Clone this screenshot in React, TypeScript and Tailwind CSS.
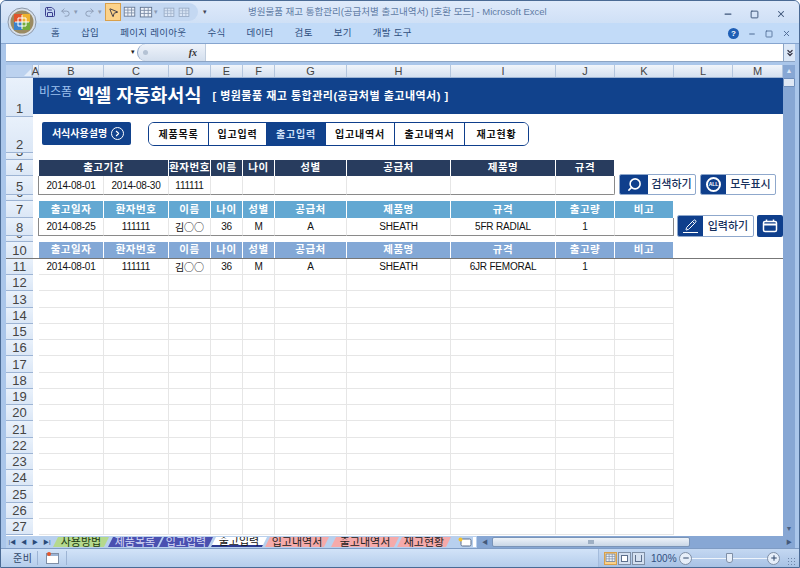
import React from 'react';
import { Pencil, Search, Save, Undo2, Redo2, MousePointer2, Minus, Square, X, Plus, ChevronRight, ChevronsDown } from 'lucide-react';

const FONT = "font-['Liberation_Sans','Noto_Sans_CJK_KR',sans-serif]";
// row header + columns A..M
const COLS = 'grid grid-cols-[27px_6px_65px_65px_42px_32px_32px_72px_104px_105px_59px_59px_59px_50px]';
const ROW_LABEL = 'flex items-end justify-center border-b border-[#9db4d4] bg-gradient-to-b from-[#e9f1fb] to-[#dbe7f6] text-[13px] leading-[15px] text-[#444] overflow-hidden';

const columnLabels = ['A', 'B', 'C', 'D', 'E', 'F', 'G', 'H', 'I', 'J', 'K', 'L', 'M'];
const searchHeads = ['환자번호', '이름', '나이', '성별', '공급처', '제품명', '규격'];
const listHeads = ['출고일자', '환자번호', '이름', '나이', '성별', '공급처', '제품명', '규격', '출고량', '비고'];
const inputRow = ['2014-08-25', '111111', '김○○', '36', 'M', 'A', 'SHEATH', '5FR RADIAL', '1', ''];
const listRow = ['2014-08-01', '111111', '김○○', '36', 'M', 'A', 'SHEATH', '6JR FEMORAL', '1', ''];
const navItems = [
  { label: '제품목록', w: 'w-[60px]' },
  { label: '입고입력', w: 'w-[58px]' },
  { label: '출고입력', w: 'w-[59px]', active: true },
  { label: '입고내역서', w: 'w-[69px]' },
  { label: '출고내역서', w: 'w-[70px]' },
  { label: '재고현황', w: 'w-[63px]' },
];
const ribbonTabs = ['홈', '삽입', '페이지 레이아웃', '수식', '데이터', '검토', '보기', '개발 도구'];
const blankRows = Array.from({ length: 16 }, (_, i) => i + 12);

function OfficeButton() {
  return (
    <svg width="30" height="30" viewBox="0 0 30 30" className="absolute left-[6px] top-[6px] z-10">
      <circle cx="15" cy="15" r="14" fill="#d8dfe8" stroke="#8b97a8" />
      <circle cx="15" cy="15" r="11.500" fill="#9a8a62" />
      <rect x="7" y="7" width="8" height="8" fill="#e2562b" />
      <rect x="15" y="7" width="8" height="8" fill="#efb12e" />
      <rect x="7" y="15" width="8" height="8" fill="#3d82cc" />
      <rect x="15" y="15" width="8" height="8" fill="#74ab3c" />
      <path d="M11 11h8v8h-8zM15 8v14M8 15h14" fill="none" stroke="#fff" strokeWidth="1" />
    </svg>
  );
}

function MiniTable({ className = '' }: { className?: string }) {
  return (
    <svg viewBox="0 0 16 14" className={className}>
      <rect x="1.500" y="1.500" width="13" height="11" fill="#eef3fa" stroke="#5d6f8c" />
      <path d="M1.500 5h13M1.500 8.500h13M6 1.500v11M10.500 1.500v11" stroke="#7c8ca6" />
    </svg>
  );
}

function HeadCell({ children, className = '' }: { children?: React.ReactNode; className?: string }) {
  return (
    <div className={`flex items-center justify-center border-r border-white text-[10.5px] font-bold tracking-[0.5px] text-white ${className}`}>
      {children}
    </div>
  );
}

function DataCell({ children, className = '' }: { children?: React.ReactNode; className?: string }) {
  const isName = typeof children === 'string' && children.includes('○');
  return (
    <div className={`flex items-center justify-center border-r border-[#e6e6e6] text-[#111] ${isName ? "font-['Noto_Sans_CJK_KR',sans-serif] text-[10px]" : 'text-[10px] tracking-[-0.2px]'} ${className}`}>
      {children}
    </div>
  );
}

function ActionButton({ icon, label, className, iconWidth }: { icon: React.ReactNode; label: string; className: string; iconWidth: string }) {
  return (
    <div className={`absolute flex overflow-hidden rounded-[2px] border border-[#8fa8cc] bg-white ${className}`}>
      <div className={`flex items-center justify-center bg-[#0f3f8c] text-white ${iconWidth}`}>{icon}</div>
      <div className="flex flex-1 items-center justify-center text-[11px] font-medium text-[#16305c]">{label}</div>
    </div>
  );
}

function SheetTab({ label, className }: { label: string; className: string }) {
  return (
    <div className={`flex h-[10px] items-center justify-center text-[11px] leading-[10px] [clip-path:polygon(5px_0,100%_0,calc(100%-5px)_100%,0_100%)] ${className}`}>
      {label}
    </div>
  );
}

export default function App() {
  return (
    <div className={`relative flex h-[568px] w-[800px] flex-col overflow-hidden rounded-t-[6px] border border-[#4a6a94] bg-[#aac6ea] ${FONT}`}>
      <OfficeButton />

      {/* 타이틀 바 */}
      <div className="relative flex h-[22px] shrink-0 items-center bg-gradient-to-b from-[#dfeafa] to-[#cfe0f6] pl-[39px]">
        <div className="flex h-[18px] items-center rounded-r-full bg-[#c4d8f2] pr-[8px] text-[#8a9ab4]">
          <Save size={12} className="ml-[4px] text-[#3b3f8f]" />
          <Undo2 size={11} className="ml-[4px]" />
          <span className="ml-[3px] w-[4px] text-[7px]">▾</span>
          <Redo2 size={11} className="ml-[6px]" />
          <span className="ml-[3px] w-[4px] text-[7px]">▾</span>
          <div className="ml-[3px] flex h-[18px] w-[16px] items-center justify-center border border-[#d9a04a] bg-[#fbd28a]">
            <MousePointer2 size={11} className="text-[#334]" />
          </div>
          <MiniTable className="ml-[2px] w-[13px]" />
          <MiniTable className="ml-[3px] w-[14px]" />
          <span className="ml-[1px] w-[4px] text-[7px]">▾</span>
          <MiniTable className="ml-[5px] w-[12px] opacity-50" />
          <MiniTable className="ml-[3px] w-[12px] opacity-50" />
        </div>
        <span className="ml-[5px] text-[7px] text-[#445]">▾</span>
        <div className="absolute left-[247px] top-[4px] whitespace-nowrap text-[9.5px] text-[#5f7ba4]">
          병원물품 재고 통합관리(공급처별 출고내역서) [호환 모드] - Microsoft Excel
        </div>
        <div className="absolute right-[13px] top-[8px] flex items-center gap-[17px] text-[#3c5478]">
          <Minus size={10} strokeWidth={3} />
          <Square size={9} strokeWidth={2.5} />
          <X size={10} strokeWidth={2.5} />
        </div>
      </div>

      {/* 리본 탭 */}
      <div className="relative flex h-[21px] shrink-0 items-center gap-[21px] border-b border-[#86a5cf] bg-[#c2dbf8] pl-[50px] text-[9.5px] tracking-[0.3px] text-[#2f4f80]">
        {ribbonTabs.map(tab => (
          <span key={tab} className="whitespace-nowrap">{tab}</span>
        ))}
        <div className="absolute right-[8px] top-[5px] flex items-center gap-[9px] text-[#4d6a94]">
          <div className="flex h-[11px] w-[11px] items-center justify-center rounded-full bg-[#1f5fb5] text-[8px] font-bold text-white">?</div>
          <Minus size={8} strokeWidth={3} />
          <Square size={8} strokeWidth={2.5} />
          <X size={9} strokeWidth={2.5} />
        </div>
      </div>

      {/* 수식 입력줄 */}
      <div className="flex h-[18px] shrink-0 px-[5px] pr-[4px]">
        <div className="flex w-full border-b border-[#8ca4c4] bg-white">
          <div className="flex w-[131px] items-center justify-end pr-[2px] text-[7px] text-[#222]">▾</div>
          <div className="flex w-[68px] items-center justify-between rounded-l-full border-l border-[#8ca4c4] bg-gradient-to-b from-[#eef3fa] to-[#d4dfee] pl-[5px] pr-[8px]">
            <span className="h-[5px] w-[5px] rounded-full bg-[#b4c2d4]" />
            <span className="font-['Liberation_Serif',serif] text-[10px] font-bold italic text-[#333]">fx</span>
          </div>
          <div className="flex-1 border-l border-[#c0cddd]" />
          <div className="flex w-[12px] items-center justify-center border-l border-[#8ca4c4] bg-[#dce8f7] text-[#334]">
            <ChevronsDown size={10} strokeWidth={3} />
          </div>
        </div>
      </div>

      <div className="h-[3px] shrink-0" />

      {/* 시트 영역 */}
      <div className="flex min-h-0 flex-1 pl-[5px] pr-[4px]">
        <div className="relative w-[777px] bg-white">
          {/* 열 머리글 */}
          <div className={`${COLS} h-[13px] border-b border-[#9db4d4] bg-gradient-to-b from-[#f1f5fb] to-[#d5e0ef] text-[11px] leading-[12px] text-[#444]`}>
            <div className="flex items-end justify-end border-r border-[#b4c6de] bg-[#bcd2ef] pb-[1px] pr-[1px]">
              <span className="h-0 w-0 border-b-[7px] border-l-[7px] border-b-[#e4edf9] border-l-transparent" />
            </div>
            {columnLabels.map(col => (
              <div key={col} className="flex items-center justify-center border-r border-[#b4c6de]">{col}</div>
            ))}
          </div>

          {/* 1행 */}
          <div className={`${COLS} h-[39px]`}>
            <div className={ROW_LABEL}>1</div>
            <div className="col-span-13 pb-[3px]">
              <div className="flex h-[36px] items-center bg-[#11428c] pl-[6px] text-white">
                <span className="-translate-y-[4px] text-[12px] leading-none text-[#9cc0ee]">비즈폼</span>
                <span className="ml-[5px] whitespace-nowrap text-[18.500px] font-bold leading-none">엑셀 자동화서식</span>
                <span className="ml-[11px] whitespace-nowrap text-[11px] font-bold tracking-[0.5px]">[ 병원물품 재고 통합관리(공급처별 출고내역서) ]</span>
              </div>
            </div>
          </div>

          {/* 2행 */}
          <div className={`${COLS} h-[36px]`}>
            <div className={ROW_LABEL}>2</div>
            <div className="col-span-13 flex items-start pl-[9px] pt-[5px]">
              <div className="flex h-[23px] w-[89px] items-center justify-center gap-[4px] rounded-[2px] bg-[#11428c] pl-[3px] text-[10px] font-bold text-white">
                서식사용설명
                <span className="flex h-[13px] w-[13px] items-center justify-center rounded-full border border-white">
                  <ChevronRight size={9} strokeWidth={3} />
                </span>
              </div>
              <div className="ml-[17px] flex h-[24px] overflow-hidden rounded-[6px] border border-[#0f3f8c]">
                {navItems.map(item => (
                  <div
                    key={item.label}
                    className={`${item.w} flex items-center justify-center border-r border-[#0f3f8c] text-[10px] font-bold tracking-[0.8px] last:border-r-0 ${item.active ? 'bg-[#11428c] text-[#cfe0f6]' : 'bg-white text-[#111]'}`}
                  >
                    {item.label}
                  </div>
                ))}
              </div>
            </div>
          </div>

          {/* 3행 */}
          <div className={`${COLS} h-[7px]`}>
            <div className={ROW_LABEL}>3</div>
          </div>

          {/* 4행 */}
          <div className={`${COLS} h-[16px]`}>
            <div className={ROW_LABEL}>4</div>
            <div />
            <HeadCell className="col-span-2 bg-[#283c5e]">출고기간</HeadCell>
            {searchHeads.map(h => (
              <HeadCell key={h} className="bg-[#283c5e]">{h}</HeadCell>
            ))}
          </div>

          {/* 5행 */}
          <div className={`${COLS} h-[19px]`}>
            <div className={ROW_LABEL}>5</div>
            <div className="border-r border-[#8a8a8a]" />
            <DataCell className="border-b border-b-[#8a8a8a]">2014-08-01</DataCell>
            <DataCell className="border-b border-b-[#8a8a8a]">2014-08-30</DataCell>
            <DataCell className="border-b border-b-[#8a8a8a]">111111</DataCell>
            {searchHeads.slice(1).map((h, i) => (
              <DataCell key={h} className={`border-b border-b-[#8a8a8a] ${i === 5 ? 'rounded-br-[2px] border-r-[#8a8a8a]' : ''}`} />
            ))}
          </div>

          {/* 6행 */}
          <div className={`${COLS} h-[6px]`}>
            <div className={ROW_LABEL}>6</div>
          </div>

          {/* 7행 */}
          <div className={`${COLS} h-[17px]`}>
            <div className={ROW_LABEL}>7</div>
            <div />
            {listHeads.map((h, i) => (
              <HeadCell key={i} className="bg-[#63a8d2]">{h}</HeadCell>
            ))}
          </div>

          {/* 8행 */}
          <div className={`${COLS} h-[18px]`}>
            <div className={ROW_LABEL}>8</div>
            <div className="border-r border-[#8a8a8a]" />
            {inputRow.map((v, i) => (
              <DataCell key={i} className={`border-b border-b-[#8a8a8a] ${i === 9 ? 'border-r-[#8a8a8a]' : ''}`}>{v}</DataCell>
            ))}
          </div>

          {/* 9행 */}
          <div className={`${COLS} h-[6px]`}>
            <div className={ROW_LABEL}>9</div>
          </div>

          {/* 10행 */}
          <div className={`${COLS} h-[17px] border-b border-[#777]`}>
            <div className={`${ROW_LABEL} border-b-0`}>10</div>
            <div />
            {listHeads.map((h, i) => (
              <HeadCell key={i} className="bg-[#83a8d6]">{h}</HeadCell>
            ))}
          </div>

          {/* 11행 */}
          <div className={`${COLS} h-[16.235px]`}>
            <div className={ROW_LABEL}>11</div>
            <div />
            {listRow.map((v, i) => (
              <DataCell key={i} className="border-b border-b-[#e6e6e6]">{v}</DataCell>
            ))}
          </div>

          {blankRows.map(n => (
            <div key={n} className={`${COLS} h-[16.235px]`}>
              <div className={ROW_LABEL}>{n}</div>
              <div />
              {listHeads.map((_, i) => (
                <DataCell key={i} className="border-b border-b-[#e6e6e6]" />
              ))}
            </div>
          ))}

          {/* 시트 위에 떠 있는 버튼 */}
          <ActionButton className="left-[613px] top-[109px] h-[21px] w-[77px]" iconWidth="w-[28px]" icon={<Search size={15} strokeWidth={2.5} className="-scale-x-100" />} label="검색하기" />
          <ActionButton
            className="left-[694px] top-[109px] h-[21px] w-[76px]"
            iconWidth="w-[25px]"
            icon={
              <span className="flex h-[15px] w-[15px] items-center justify-center rounded-full border-2 border-white text-[5px] font-bold">ALL</span>
            }
            label="모두표시"
          />
          <ActionButton
            className="left-[671px] top-[150px] h-[22px] w-[77px]"
            iconWidth="w-[25px]"
            icon={
              <span className="flex flex-col items-center">
                <Pencil size={12} />
                <span className="mt-[1px] h-[1px] w-[15px] bg-white" />
              </span>
            }
            label="입력하기"
          />
          <div className="absolute left-[751px] top-[150px] flex h-[22px] w-[26px] items-center justify-center rounded-[2px] bg-[#0f3f8c]">
            <svg width="16" height="14" viewBox="0 0 16 14" fill="none" stroke="#fff">
              <rect x="1.500" y="2.500" width="13" height="10" rx="1.500" strokeWidth="1.500" />
              <path d="M1.500 5.500h13" strokeWidth="2" />
              <path d="M4.500 0.500v2M11.500 0.500v2" strokeWidth="1.500" />
            </svg>
          </div>
        </div>

        {/* 세로 스크롤바 */}
        <div className="flex w-[13px] flex-col items-center bg-[#87a7d4]">
          <div className="flex h-[13px] w-full items-center justify-center text-[7px] text-[#dce8f7]">▲</div>
          <div className="h-[9px] w-full rounded-[1px] border border-[#6f8fbc] bg-[#dfe8f5]" />
          <div className="flex-1" />
          <div className="flex h-[13px] w-full items-center justify-center text-[7px] text-[#4a5f80]">▼</div>
        </div>
      </div>

      {/* 시트 탭 + 가로 스크롤바 */}
      <div className="flex h-[12px] shrink-0 items-stretch pl-[5px] pr-[4px]">
        <div className="flex w-[471px] items-center bg-[#b8d0ee]">
          <div className="flex w-[47px] items-center justify-around text-[6px] text-[#2b4a78]">
            <span>|◀</span><span>◀</span><span>▶</span><span>▶|</span>
          </div>
          <SheetTab label="사용방법" className="w-[56px] bg-[#b5d98d] text-[#1c3a12]" />
          <SheetTab label="제품목록" className="-ml-[1px] w-[54px] bg-[#4a50b0] text-[#d8dcf6]" />
          <SheetTab label="입고입력" className="-ml-[3px] w-[54px] bg-[#4a50b0] text-[#d8dcf6]" />
          <SheetTab label="출고입력" className="-ml-[2px] w-[56px] border-b-2 border-[#2b3a90] bg-white text-[#111]" />
          <SheetTab label="입고내역서" className="-ml-[2px] w-[64px] bg-[#f5aaaa] text-[#222]" />
          <SheetTab label="출고내역서" className="ml-[2px] w-[68px] bg-[#f5aaaa] text-[#222]" />
          <SheetTab label="재고현황" className="-ml-[2px] w-[54px] bg-[#f5aaaa] text-[#222]" />
          <svg width="15" height="10" viewBox="0 0 15 10" className="ml-[6px]">
            <rect x="4" y="2" width="10" height="7" rx="1.500" fill="#fff" stroke="#5d6f8c" />
            <circle cx="3.500" cy="2.500" r="2" fill="#f2c230" />
          </svg>
          <div className="ml-[1px] h-[10px] w-[3px] bg-white" />
        </div>
        <div className="flex flex-1 items-center bg-[#87a7d4]">
          <span className="ml-[5px] text-[6px] text-[#44597a]">◀</span>
          <div className="ml-[4px] flex h-[10px] w-[198px] items-center justify-center rounded-[2px] border border-[#7a94b8] bg-gradient-to-b from-[#eef3f9] to-[#c9d6e6]">
            <span className="h-[4px] w-[6px] bg-[#9fb0c4]" />
          </div>
          <div className="flex-1" />
          <span className="mr-[3px] text-[6px] text-[#44597a]">▶</span>
        </div>
      </div>

      {/* 상태 표시줄 */}
      <div className="flex h-[19px] shrink-0 border-t border-[#7f9cc4] bg-gradient-to-b from-[#d2e3f8] to-[#b5cdeb] text-[10px] text-[#2f4668]">
        <div className="flex flex-1 items-center pl-[12px]">
          <span className="tracking-[0.5px]">준비</span>
          <div className="ml-[5px] h-[14px] w-[1px] bg-[#9db4d4]" />
          <svg width="13" height="12" viewBox="0 0 13 12" className="ml-[8px]">
            <rect x="0.500" y="1.500" width="12" height="10" fill="#fff" stroke="#7f8fa6" />
            <rect x="1" y="2" width="11" height="2" fill="#9db4d4" />
            <circle cx="3" cy="2" r="2" fill="#e2562b" />
          </svg>
          <div className="ml-[7px] h-[14px] w-[1px] bg-[#9db4d4]" />
        </div>
        <div className="flex w-[201px] items-center border-l border-[#a4bcdc] bg-gradient-to-b from-[#c4d8f2] to-[#a8c2e4] pl-[5px]">
          <div className="flex h-[13px] w-[13px] items-center justify-center border border-[#d9a04a] bg-[#fbd28a]">
            <MiniTable className="w-[11px]" />
          </div>
          <div className="ml-[1px] flex h-[13px] w-[13px] items-center justify-center border border-[#7f8fa6] bg-[#d4e0f0]">
            <span className="h-[7px] w-[7px] border border-[#5d6f8c] bg-white" />
          </div>
          <div className="ml-[1px] flex h-[13px] w-[13px] items-center justify-center border border-[#7f8fa6] bg-[#d4e0f0]">
            <span className="h-[7px] w-[7px] border-x border-b border-[#5d6f8c]" />
          </div>
          <span className="ml-[6px] w-[22px] whitespace-nowrap text-[#2f4f80]">100%</span>
          <div className="ml-[6px] flex h-[13px] w-[13px] items-center justify-center rounded-full border border-[#7f8fa6] bg-[#e6eef9]">
            <Minus size={8} strokeWidth={3} />
          </div>
          <div className="relative h-[1px] w-[75px] bg-[#eef4fb]">
            <div className="absolute left-[34px] -top-[5px] h-[10px] w-[7px] rounded-b-[3px] border border-[#7f8fa6] bg-[#e6eef9]" />
          </div>
          <div className="flex h-[13px] w-[13px] items-center justify-center rounded-full border border-[#7f8fa6] bg-[#e6eef9]">
            <Plus size={8} strokeWidth={3} />
          </div>
          <div className="ml-[7px] mt-[6px] h-[8px] w-[8px] bg-[radial-gradient(#6f86a8_1px,transparent_1px)] bg-[length:3px_3px]" />
        </div>
      </div>
    </div>
  );
}
